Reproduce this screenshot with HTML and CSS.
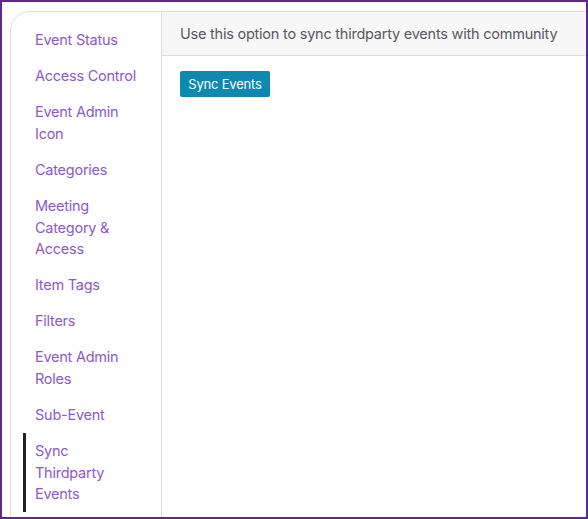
FILE: index.html
```html
<!DOCTYPE html>
<html>
<head>
<meta charset="utf-8">
<link rel="stylesheet" href="styles.css">
</head>
<body>
<div class="frame">
  <div class="card">
    <nav class="sidebar">
      <ul class="menu">
        <li class="item"><a>Event Status</a></li>
        <li class="item"><a>Access Control</a></li>
        <li class="item"><a>Event Admin Icon</a></li>
        <li class="item"><a>Categories</a></li>
        <li class="item"><a>Meeting Category &amp; Access</a></li>
        <li class="item"><a>Item Tags</a></li>
        <li class="item"><a>Filters</a></li>
        <li class="item"><a>Event Admin Roles</a></li>
        <li class="item"><a>Sub-Event</a></li>
        <li class="item active"><a>Sync Thirdparty Events</a></li>
      </ul>
    </nav>
    <main class="main">
      <div class="header">Use this option to sync thirdparty events with community</div>
      <div class="body">
        <button class="btn">Sync Events</button>
      </div>
    </main>
  </div>
</div>
</body>
</html>
```

FILE: styles.css
```css
html, body {
  margin: 0;
  padding: 0;
  background: #fff;
}
.frame {
  box-sizing: border-box;
  width: 588px;
  height: 519px;
  border: 2px solid #62248e;
  overflow: hidden;
  padding: 9px 0 0 8px;
  font-family: Inter, "Noto Sans", sans-serif;
}
.card {
  display: flex;
  width: 640px;
  height: 620px;
  border: 1px solid #dedede;
  border-radius: 20px 0 0 0;
  background: #fff;
}
.sidebar {
  width: 150px;
  flex: none;
  border-right: 1px solid #dedede;
}
.menu {
  list-style: none;
  margin: 0;
  padding: 10px 0 0 12px;
}
.item {
  width: 102px;
  padding: 7.2px 0 7.2px 9px;
  border-left: 3px solid transparent;
  font-size: 14.5px;
  line-height: 21.65px;
  letter-spacing: -0.25px;
  color: #9058ca;
}
.item a {
  color: inherit;
  text-decoration: none;
}
.item.active {
  border-left-color: #222;
}
.main {
  flex: 1;
}
.header {
  box-sizing: border-box;
  height: 44px;
  background: #f7f7f7;
  border-bottom: 1px solid #dcdcdc;
  padding: 0 18px;
  display: flex;
  align-items: center;
  font-size: 14.5px;
  letter-spacing: -0.23px;
  color: #585863;
}
.body {
  padding: 15px 18px;
}
.btn {
  width: 90px;
  height: 26px;
  border: none;
  border-radius: 2px;
  background: #0d88b0;
  color: #fff;
  font-family: Inter, "Noto Sans", sans-serif;
  font-size: 13px;
  padding: 0;
  letter-spacing: -0.2px;
}
```
